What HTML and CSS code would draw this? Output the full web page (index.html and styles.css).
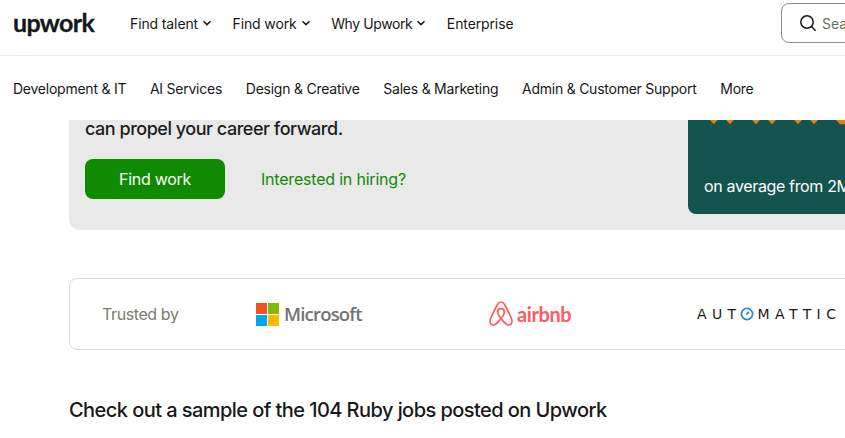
FILE: index.html
```html
<!DOCTYPE html>
<html lang="en">
<head>
<meta charset="utf-8">
<title>Ruby jobs on Upwork</title>
<link rel="stylesheet" href="styles.css">
</head>
<body>
<header class="site-header">
  <div class="top-bar">
    <a class="logo">upwork</a>
    <nav class="main-nav">
      <a class="nav-item">Find talent <svg class="chev" viewBox="0 0 10 6"><path d="M1.500 1.200 5 4.600l3.500-3.400"/></svg></a>
      <a class="nav-item">Find work <svg class="chev" viewBox="0 0 10 6"><path d="M1.500 1.200 5 4.600l3.500-3.400"/></svg></a>
      <a class="nav-item nav-tight">Why Upwork <svg class="chev" viewBox="0 0 10 6"><path d="M1.500 1.200 5 4.600l3.500-3.400"/></svg></a>
      <a class="nav-item">Enterprise</a>
    </nav>
    <div class="search">
      <svg class="search-icon" viewBox="0 0 18 18"><circle cx="8" cy="8" r="6.200"/><path d="M12.500 12.500 16.600 16.800"/></svg>
      <span class="search-text">Search</span>
    </div>
  </div>
  <nav class="cat-bar">
    <a>Development &amp; IT</a>
    <a>AI Services</a>
    <a>Design &amp; Creative</a>
    <a>Sales &amp; Marketing</a>
    <a>Admin &amp; Customer Support</a>
    <a>More</a>
  </nav>
</header>
<main class="content">
  <section class="hero">
    <div class="hero-copy">
      <p class="hero-text">can propel your career forward.</p>
      <div class="hero-actions">
        <a class="btn">Find work</a>
        <a class="hire-link">Interested in hiring?</a>
      </div>
    </div>
    <aside class="stat">
      <svg class="stars" viewBox="0 0 157 5">
        <path d="M22 0h7.500l-3.700 4.200zM38 0h8l-4 4.200zM64 0h8l-4 4.200zM80 0h8l-4 4.200zM106 0h8l-4 4.200zM122 0h8l-4 4.200zM148 0h9v4.200h-5z"/>
      </svg>
      <p class="stat-text">on average from 2M+ reviews</p>
    </aside>
  </section>
  <section class="trusted">
    <span class="trusted-label">Trusted by</span>
    <div class="brand microsoft">
      <span class="ms-grid"><i class="ms-r"></i><i class="ms-g"></i><i class="ms-b"></i><i class="ms-y"></i></span>
      <span class="ms-word">Microsoft</span>
    </div>
    <div class="brand airbnb">
      <svg class="bnb-icon" viewBox="0 0 24 26"><path d="M12 17.500c-2-2.600-3.300-4.800-3.300-6.600 0-2 1.400-3.200 3.300-3.200s3.300 1.200 3.300 3.200c0 1.800-1.300 4-3.300 6.600Zm0 0c2.600 3.200 4.900 6.500 7.400 6.500 2.300 0 3.600-1.800 3.600-3.800 0-1.300-.4-2.400-1-3.700C19.500 11 17.500 7 15.500 3.500 14.500 1.800 13.500 1 12 1s-2.500.8-3.500 2.500C6.500 7 4.500 11 2 16.500c-.6 1.300-1 2.400-1 3.700C1 22.200 2.300 24 4.600 24c2.500 0 4.800-3.300 7.400-6.500Z"/></svg>
      <span>airbnb</span>
    </div>
    <div class="brand automattic">
      <span>AUT</span><svg class="auto-o" viewBox="0 0 14 14"><circle cx="7" cy="7" r="5.600"/><path d="M9 5 6.300 7.700"/></svg><span>MATTIC</span>
    </div>
  </section>
  <h2 class="jobs-title">Check out a sample of the 104 Ruby jobs posted on Upwork</h2>
</main>
</body>
</html>
```
FILE: styles.css
```css
* { box-sizing: border-box; }
html, body { margin: 0; height: 100%; }
body {
  overflow: hidden;
  background: #fff;
  color: #181818;
  font-family: Inter, "Liberation Sans", sans-serif;
}
a { color: inherit; text-decoration: none; }
p { margin: 0; }

.site-header { background: #fff; height: 120px; }
.top-bar {
  display: flex;
  align-items: center;
  height: 56px;
  padding: 0 0 9px 13px;
  border-bottom: 1px solid #e4e8e4;
}
.logo {
  flex: none;
  width: 117px;
  margin-top: -2px;
  font-family: Lato, sans-serif;
  font-size: 25px;
  font-weight: 700;
  letter-spacing: -.65px;
  color: #14181a;
  -webkit-text-stroke: .3px #14181a;
}
.main-nav { flex: none; display: flex; gap: 20.500px; font-size: 14px; width: 651px; letter-spacing: -.12px; }
.nav-item { display: flex; align-items: center; gap: 4px; white-space: nowrap; }
.nav-tight { letter-spacing: -.4px; }
.chev { width: 10px; height: 6px; fill: none; stroke: #181818; stroke-width: 1.500; }
.search {
  display: flex;
  align-items: center;
  gap: 5px;
  flex: none;
  width: 200px;
  height: 40px;
  padding-left: 17px;
  border: 1px solid #8a918a;
  border-radius: 8px;
  font-size: 14px;
  color: #676f67;
}
.search-icon { width: 18px; height: 18px; fill: none; stroke: #181818; stroke-width: 1.500; flex: none; }
.cat-bar {
  display: flex;
  gap: 23.700px;
  align-items: center;
  height: 64px;
  padding: 0 0 0 13px;
  font-size: 14px;
  letter-spacing: -.24px;
  white-space: nowrap;
}

.content { padding-left: 69px; width: 1000px; }
.hero {
  display: flex;
  justify-content: space-between;
  height: 110px;
  background: #e9e9e9;
  border-radius: 0 0 0 10px;
}
.hero-copy { padding-left: 16px; width: 619px; }
.hero-text { font-size: 18px; line-height: 18px; font-weight: 500; letter-spacing: -.48px; color: #1c1c1c; }
.hero-actions { display: flex; align-items: center; gap: 36px; margin-top: 21px; }
.btn {
  display: flex;
  align-items: center;
  justify-content: center;
  width: 140px;
  height: 40px;
  background: #108a00;
  border-radius: 8px;
  color: #fff;
  font-size: 16px;
  letter-spacing: -.3px;
}
.hire-link { color: #108a00; font-size: 16px; letter-spacing: -.2px; }
.stat {
  width: 312px;
  height: 94px;
  background: #13544e;
  border-radius: 0 0 0 8px;
  color: #fff;
  position: relative;
}
.stars { display: block; width: 157px; height: 5px; fill: #e77f0d; }
.stat-text { position: absolute; left: 16px; top: 56px; font-size: 16px; letter-spacing: -.35px; white-space: nowrap; }

.trusted {
  display: flex;
  align-items: center;
  height: 72px;
  margin-top: 48px;
  padding-left: 32px;
  border: 1px solid #d5e0d5;
  border-radius: 8px;
  white-space: nowrap;
}
.trusted-label { width: 154px; font-size: 16px; letter-spacing: -.4px; color: #7c7c72; }
.brand { display: flex; align-items: center; }
.microsoft { width: 233px; gap: 5px; font-size: 18.500px; font-weight: 600; color: #737373; font-family: "Open Sans", sans-serif; letter-spacing: -.8px; }
.ms-word { margin-top: -2px; }
.ms-grid { display: grid; grid-template-columns: 11px 11px; grid-auto-rows: 11px; gap: 1px; }
.ms-grid i { display: block; }
.ms-r { background: #f25022; }
.ms-g { background: #7fba00; }
.ms-b { background: #00a4ef; }
.ms-y { background: #ffb900; }
.airbnb { width: 208px; gap: 4px; font-family: Lato, sans-serif; font-weight: 700; font-size: 20px; letter-spacing: -.4px; color: #ff5a5f; }
.bnb-icon { width: 24px; height: 26px; fill: none; stroke: #ff5a5f; stroke-width: 1.700; }
.automattic { font-family: "DejaVu Sans", sans-serif; font-size: 14px; letter-spacing: 5.400px; color: #1c1c1c; }
.auto-o { width: 14px; height: 14px; margin-right: 4px; margin-left: -2px; fill: none; stroke: #2f8fc0; stroke-width: 1.800; }

.jobs-title { margin: 48px 0 0; font-size: 20px; line-height: 24px; font-weight: 500; letter-spacing: -.56px; color: #181818; }
```
